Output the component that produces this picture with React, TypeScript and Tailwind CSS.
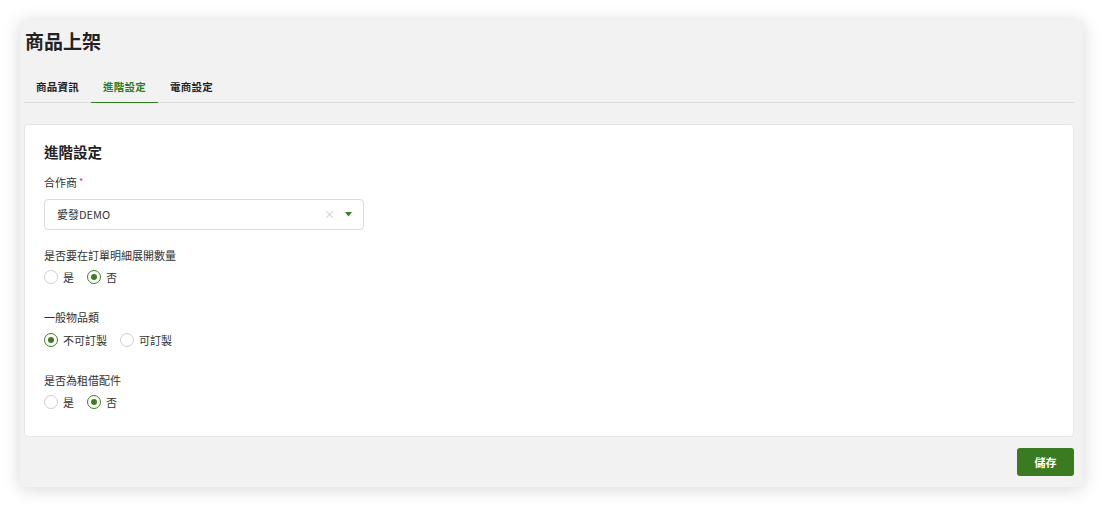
import { useState } from "react";

const font = { fontFamily: '"Noto Sans CJK TC", "Noto Sans", sans-serif' };

function Radio({ checked, label, onClick }: { checked: boolean; label: string; onClick: () => void }) {
  return (
    <label className="flex items-center gap-[5px] cursor-pointer" onClick={onClick}>
      <span
        className={
          checked
            ? "w-[14px] h-[14px] rounded-full border border-[#3b7d23] bg-white flex items-center justify-center"
            : "w-[14px] h-[14px] rounded-full border border-[#d0d0d0] bg-white"
        }
      >
        {checked && <span className="w-[6px] h-[6px] rounded-full bg-[#3b7d23]" />}
      </span>
      <span className="text-[11px] leading-[16px] text-[#333]">{label}</span>
    </label>
  );
}

function RadioGroup({ options, value, onChange }: { options: string[]; value: string; onChange: (v: string) => void }) {
  return (
    <div className="flex items-center gap-[13px]">
      {options.map((o) => (
        <Radio key={o} label={o} checked={value === o} onClick={() => onChange(o)} />
      ))}
    </div>
  );
}

export default function App() {
  const [tab, setTab] = useState("進階設定");
  const [expand, setExpand] = useState("否");
  const [custom, setCustom] = useState("不可訂製");
  const [rental, setRental] = useState("否");
  const tabs = ["商品資訊", "進階設定", "電商設定"];

  return (
    <div className="bg-white min-h-screen w-[1103px] h-[507px] pt-[20px] pl-[20px]" style={font}>
      <div className="w-[1063px] h-[467px] bg-[#f2f2f2] rounded-[3px] shadow-[0_2px_18px_rgba(0,0,0,0.16)] pl-[4px] pr-[9px] pt-[9px] flex flex-col">
        {/* 標題 */}
        <h1 className="text-[19px] leading-[24px] font-bold text-[#222] pl-[1px]">商品上架</h1>

        {/* 分頁 */}
        <div className="flex mt-[18px] border-b border-[#dcdcdc]">
          {tabs.map((t) => (
            <button
              key={t}
              onClick={() => setTab(t)}
              className={
                tab === t
                  ? "w-[67px] h-[32px] text-[10.5px] tracking-[0.3px] font-bold text-[#2e7d1f] border-b-[1.5px] border-[#2e7d1f] -mb-px"
                  : "w-[67px] h-[32px] text-[10.5px] tracking-[0.3px] font-bold text-[#222] border-b-[1.5px] border-transparent -mb-px"
              }
            >
              {t}
            </button>
          ))}
        </div>

        {/* 內容卡片 */}
        <div className="mt-[21px] bg-white border border-[#e6e6e6] rounded-[4px] pt-[18px] px-[19px] pb-[26px]">
          <h2 className="text-[14.5px] leading-[17px] font-bold text-[#222]">進階設定</h2>

          <div className="mt-[14px] text-[11px] leading-[16px] text-[#333]">
            合作商<span className="text-[#e0393e] ml-[2px] align-top text-[9px]">*</span>
          </div>
          <div className="mt-[9px] w-[320px] h-[31px] border border-[#dcdcdc] rounded-[4px] flex items-center pl-[12px] pr-[11px]">
            <span className="text-[11px] text-[#333] flex-1">愛發DEMO</span>
            <span className="text-[11px] text-[#c8c8c8] leading-none mr-[10px]">×</span>
            <svg width="7" height="5" viewBox="0 0 7 5">
              <path d="M0 0 H7 L3.5 4.5 Z" fill="#3b7d23" />
            </svg>
          </div>

          <div className="mt-[17px] text-[11px] leading-[16px] text-[#333]">是否要在訂單明細展開數量</div>
          <div className="mt-[6px]">
            <RadioGroup options={["是", "否"]} value={expand} onChange={setExpand} />
          </div>

          <div className="mt-[24px] text-[11px] leading-[16px] text-[#333]">一般物品類</div>
          <div className="mt-[7px]">
            <RadioGroup options={["不可訂製", "可訂製"]} value={custom} onChange={setCustom} />
          </div>

          <div className="mt-[24px] text-[11px] leading-[16px] text-[#333]">是否為租借配件</div>
          <div className="mt-[6px]">
            <RadioGroup options={["是", "否"]} value={rental} onChange={setRental} />
          </div>
        </div>

        {/* 儲存 */}
        <div className="flex justify-end mt-[11px]">
          <button className="w-[57px] h-[28px] rounded-[3px] bg-[#3a7a20] text-white text-[11px] font-bold">
            儲存
          </button>
        </div>
      </div>
    </div>
  );
}
